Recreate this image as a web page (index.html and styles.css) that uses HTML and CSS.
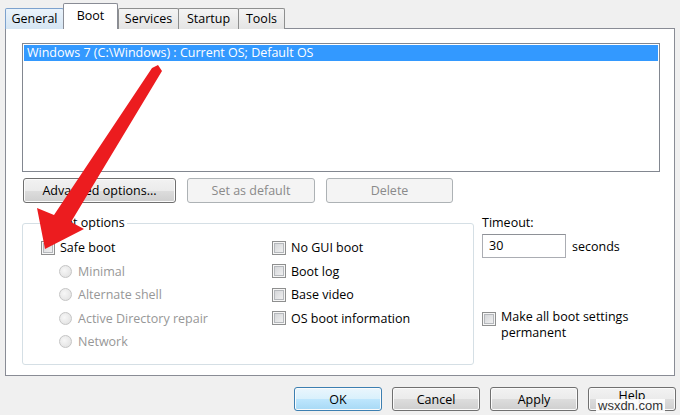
FILE: index.html
```html
<!DOCTYPE html>
<html>
<head>
<meta charset="utf-8">
<link rel="stylesheet" href="styles.css">
</head>
<body>
<div class="dialog">
  <div class="tabs">
    <div class="tab hover w-general">General</div>
    <div class="tab active w-boot">Boot</div>
    <div class="tab w-services">Services</div>
    <div class="tab w-startup">Startup</div>
    <div class="tab w-tools">Tools</div>
  </div>
  <div class="panel">
    <div class="listbox">
      <div class="row selected">Windows 7 (C:\Windows) : Current OS; Default OS</div>
    </div>
    <div class="btnrow">
      <button class="btn w-adv">Advanced options...</button>
      <button class="btn disabled w-set">Set as default</button>
      <button class="btn disabled w-del">Delete</button>
    </div>
    <div class="lower">
      <fieldset class="group">
        <legend>Boot options</legend>
        <div class="grid">
          <div class="col">
            <label class="item"><span class="cb"></span>Safe boot</label>
            <label class="item sub dis"><span class="rb"></span>Minimal</label>
            <label class="item sub dis"><span class="rb"></span>Alternate shell</label>
            <label class="item sub dis"><span class="rb"></span>Active Directory repair</label>
            <label class="item sub dis"><span class="rb"></span>Network</label>
          </div>
          <div class="col">
            <label class="item"><span class="cb"></span>No GUI boot</label>
            <label class="item"><span class="cb"></span>Boot log</label>
            <label class="item"><span class="cb"></span>Base video</label>
            <label class="item"><span class="cb"></span>OS boot information</label>
          </div>
        </div>
      </fieldset>
      <div class="side">
        <div class="label">Timeout:</div>
        <div class="timeout">
          <div class="input">30</div>
          <span>seconds</span>
        </div>
        <label class="perm"><span class="cb"></span><span>Make all boot settings<br>permanent</span></label>
      </div>
    </div>
  </div>
  <div class="footer">
    <button class="btn ok">OK</button>
    <button class="btn">Cancel</button>
    <button class="btn">Apply</button>
    <button class="btn help">Help</button>
  </div>
</div>
<svg class="arrow" width="680" height="415" viewBox="0 0 680 415">
  <polygon points="45,249 84,229 71,222 162,71 158,65 152,68 54,215 37,208" fill="#ec1c1f"/>
</svg>
<div class="watermark">wsxdn.com</div>
</body>
</html>
```
FILE: styles.css
```css
html, body {
  margin: 0;
  padding: 0;
}
body {
  width: 680px;
  height: 415px;
  background: #f0f0f0;
  font-family: "Open Sans", "Noto Sans", sans-serif;
  font-size: 12.5px;
  color: #000;
  overflow: hidden;
  position: relative;
}
.dialog {
  padding: 3px 5px 0 5px;
}
.tabs {
  display: flex;
  align-items: flex-end;
  height: 26px;
  margin-bottom: -1px;
  position: relative;
  z-index: 1;
}
.tab {
  box-sizing: border-box;
  height: 21px;
  border: 1px solid #8e8f8f;
  border-bottom: none;
  border-radius: 2px 2px 0 0;
  background: linear-gradient(#f4f4f4, #e4e4e4);
  display: flex;
  justify-content: center;
  padding-top: 1px;
  line-height: 17px;
  margin-right: -1px;
}
.tab.hover {
  background: linear-gradient(#eaf3fb, #d5e5f3);
  border-color: #7da2ce;
}
.tab.active {
  height: 26px;
  background: #fff;
  border-color: #898c95;
  padding-top: 3px;
  margin-left: 0;
  margin-right: 0;
}
.w-general { width: 59px; }
.w-boot { width: 55px; }
.w-services { width: 61px; }
.w-startup { width: 61px; }
.w-tools { width: 47px; }
.panel {
  box-sizing: border-box;
  height: 348px;
  border: 1px solid #898c95;
  background: #fff;
}
.listbox {
  box-sizing: border-box;
  height: 129px;
  margin: 14px 14px 0 16px;
  border: 1px solid #828790;
  padding: 1px;
}
.row {
  height: 16px;
  line-height: 16px;
  padding-left: 3px;
  white-space: nowrap;
}
.row.selected {
  background: #3399ff;
  color: #fff;
}
.btnrow {
  display: flex;
  gap: 11px;
  margin: 6px 0 0 17px;
}
.btn {
  box-sizing: border-box;
  height: 25px;
  border: 1px solid #707070;
  border-radius: 3px;
  background: linear-gradient(#f2f2f2 0%, #ebebeb 50%, #dddddd 50%, #cfcfcf 100%);
  box-shadow: inset 0 0 0 1px #fbfbfb;
  font: inherit;
  color: #000;
  padding: 0;
}
.btn.disabled {
  border-color: #adb2b5;
  background: #f4f4f4;
  box-shadow: none;
  color: #8a8a8a;
}
.w-adv { width: 153px; }
.w-set { width: 128px; }
.w-del { width: 127px; }
.lower {
  display: flex;
  margin: 12px 0 0 16px;
}
.group {
  box-sizing: border-box;
  width: 452px;
  height: 150px;
  margin: 0;
  border: 1px solid #d5dfe5;
  border-radius: 3px;
  padding: 5px 0 0 18px;
}
.group legend {
  padding: 0 2px;
  margin-left: 7px;
  line-height: 16px;
}
.grid {
  display: grid;
  grid-template-columns: 231px 1fr;
}
.col {
  display: flex;
  flex-direction: column;
}
.item {
  display: flex;
  align-items: center;
  gap: 5px;
  height: 23.5px;
  white-space: nowrap;
}
.item.sub {
  padding-left: 18px;
  gap: 6px;
}
.item.dis {
  color: #979797;
}
.cb {
  box-sizing: border-box;
  width: 14px;
  height: 14px;
  flex: none;
  border: 1px solid #8e8f8f;
  background: linear-gradient(135deg, #cfd1d4, #f5f5f5);
  box-shadow: inset 0 0 0 1px #f6f6f6, inset 0 0 0 2px #b5b8bc;
}
.rb {
  box-sizing: border-box;
  width: 13px;
  height: 13px;
  flex: none;
  border-radius: 50%;
  border: 1px solid #c5c5c5;
  background: radial-gradient(circle at 40% 40%, #f7f7f7, #dedede);
}
.side {
  margin-left: 8px;
  display: flex;
  flex-direction: column;
}
.label {
  line-height: 16px;
}
.timeout {
  display: flex;
  align-items: center;
  gap: 6px;
  margin-top: 3px;
}
.input {
  box-sizing: border-box;
  width: 84px;
  height: 24px;
  border: 1px solid #abadb3;
  border-top-color: #8e9197;
  padding-left: 6px;
  line-height: 22px;
}
.perm {
  display: flex;
  align-items: flex-start;
  gap: 5px;
  margin-top: 51px;
  line-height: 16px;
}
.perm .cb {
  margin-top: 3px;
}
.footer {
  display: flex;
  justify-content: flex-end;
  gap: 10px;
  margin: 11px -1px 0 0;
}
.footer .btn {
  width: 88px;
  height: 24px;
}
.btn.help {
  line-height: 14px;
  padding-bottom: 6px;
}
.btn.ok {
  border-color: #3c7fb1;
  background: linear-gradient(#eaf6fd 0%, #d9f0fc 50%, #bee6fd 50%, #a7d9f5 100%);
}
.arrow {
  position: absolute;
  left: 0;
  top: 0;
  pointer-events: none;
}
.watermark {
  position: absolute;
  left: 596px;
  top: 399px;
  font-family: "Liberation Sans", sans-serif;
  font-size: 13px;
  line-height: 14px;
  color: #333;
  background: rgba(255, 255, 255, 0.9);
  padding: 0 2px;
}
```
